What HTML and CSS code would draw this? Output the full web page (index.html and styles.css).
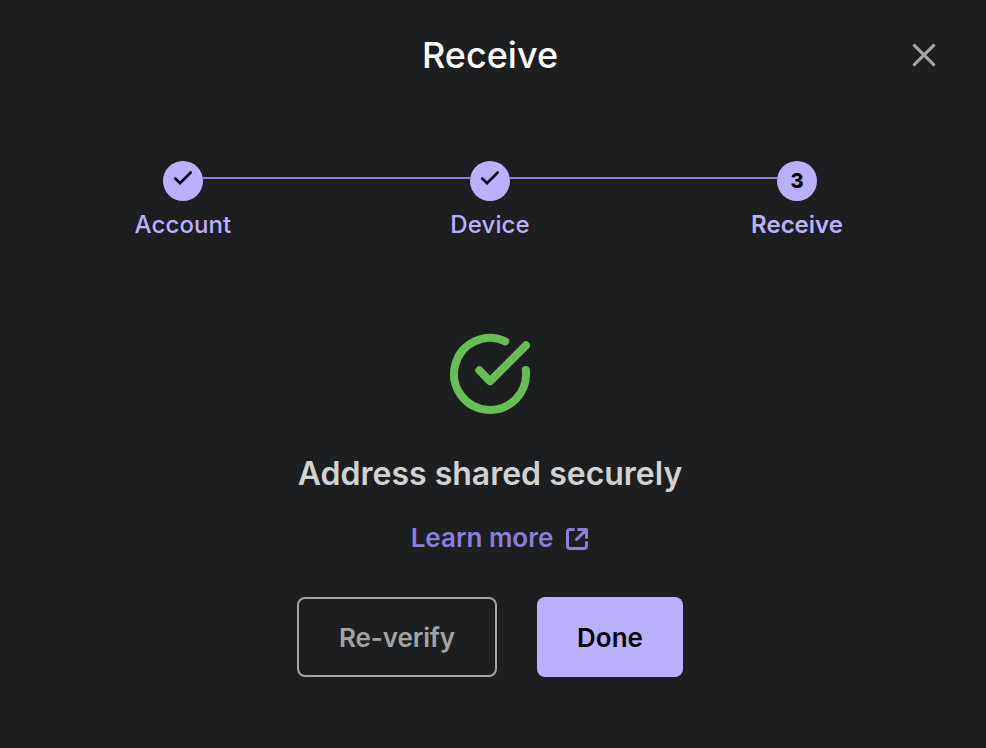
FILE: index.html
```html
<!DOCTYPE html>
<html lang="en">
<head>
<meta charset="utf-8">
<title>Receive</title>
<link rel="stylesheet" href="styles.css">
</head>
<body>
<main class="modal">
  <header class="header">
    <h1 class="title">Receive</h1>
    <button class="close" aria-label="Close"><svg width="24" height="24" viewBox="0 0 24 24"><path d="M2.300 2.300L21.700 21.700M21.700 2.300L2.300 21.700" fill="none" stroke="#a3a4a4" stroke-width="3.100" stroke-linecap="round"/></svg></button>
  </header>
  <ol class="steps">
    <li class="step"><span class="dot"><svg class="tick" width="20" height="16" viewBox="0 0 20 16"><path d="M2.300 8.500L7 13.200L17.700 2.500" fill="none" stroke="#000" stroke-width="2.600" stroke-linecap="round"/></svg></span><span class="label">Account</span></li>
    <li class="line"></li>
    <li class="step"><span class="dot"><svg class="tick" width="20" height="16" viewBox="0 0 20 16"><path d="M2.300 8.500L7 13.200L17.700 2.500" fill="none" stroke="#000" stroke-width="2.600" stroke-linecap="round"/></svg></span><span class="label">Device</span></li>
    <li class="line"></li>
    <li class="step current"><span class="dot">3</span><span class="label">Receive</span></li>
  </ol>
  <section class="result">
    <svg class="success" width="84" height="84" viewBox="0 0 84 84"><path d="M57.200 9.300A36 36 0 1 0 77.800 38M31.300 38.300L42 49.300L78 13.300" fill="none" stroke="#66be54" stroke-width="8" stroke-linecap="round" stroke-linejoin="round"/></svg>
    <h2 class="message">Address shared securely</h2>
    <a class="learn" href="#"><span>Learn more</span><svg width="24" height="24" viewBox="0 0 24 24"><path d="M8.500 2.500H5Q2.500 2.500 2.500 5V19Q2.500 21.500 5 21.500H19Q21.500 21.500 21.500 19V15.500M13.500 2.500H21.500V10.500M21 3L11.500 12.500" fill="none" stroke="#8a80db" stroke-width="3" stroke-linecap="round" stroke-linejoin="round"/></svg></a>
  </section>
  <footer class="actions">
    <button class="btn secondary">Re-verify</button>
    <button class="btn primary">Done</button>
  </footer>
</main>
</body>
</html>
```
FILE: styles.css
```css
* { box-sizing: border-box; }
body { margin: 0; background: #1d1e20; font-family: Inter, sans-serif; }
button { font: inherit; padding: 0; border: 0; background: none; }
svg { display: block; }
.modal { width: 986px; height: 748px; padding-right: 6px; display: flex; flex-direction: column; align-items: center; }
.header { width: 100%; height: 110px; display: grid; grid-template-columns: 1fr auto 1fr; align-items: center; }
.title { margin: 0; grid-column: 2; font-size: 36px; line-height: 44px; font-weight: 460; letter-spacing: 0; color: #fff; }
.close { justify-self: end; margin-right: 44px; }
.steps { list-style: none; margin: 51px 0 0; padding: 0; width: 654px; display: flex; }
.step { width: 40px; display: flex; flex-direction: column; align-items: center; }
.line { flex: 1; height: 2px; margin-top: 16px; background: #8a80db; }
.dot { width: 40px; height: 40px; border-radius: 50%; background: #bbb0ff; display: flex; align-items: center; justify-content: center; font-size: 20px; font-weight: 800; color: #000; }
.tick { margin-top: -6px; }
.label { margin-top: 9px; font-size: 24px; line-height: 30px; font-weight: 450; letter-spacing: 0.1px; color: #bbb0ff; white-space: nowrap; }
.current .label { font-weight: 600; letter-spacing: 0; }
.result { margin-top: 92px; display: flex; flex-direction: column; align-items: center; }
.message { margin: 38px 0 0; font-size: 32px; line-height: 40px; font-weight: 600; color: #d2d2d2; white-space: nowrap; }
.learn { margin-top: 28px; margin-left: 20px; display: flex; align-items: center; gap: 12px; font-size: 26px; line-height: 32px; font-weight: 600; color: #8a80db; text-decoration: none; }
.learn svg { margin-top: 1px; }
.actions { margin-top: 43px; display: flex; gap: 40px; }
.btn { height: 80px; border-radius: 8px; font-size: 26px; font-weight: 600; }
.secondary { width: 200px; border: 2px solid #a3a4a4; color: #a3a4a4; letter-spacing: -0.1px; }
.primary { width: 146px; background: #bbb0ff; color: #000; }
```
